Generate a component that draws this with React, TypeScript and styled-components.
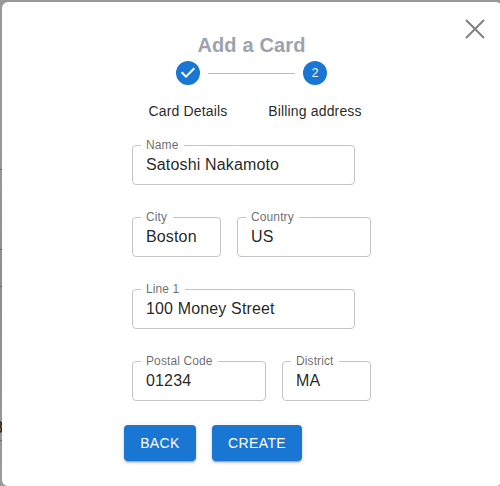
import React from "react";
import styled, { createGlobalStyle } from "styled-components";

const GlobalStyle = createGlobalStyle`
  *, *::before, *::after { box-sizing: border-box; }
  body {
    margin: 0;
    overflow: hidden;
    font-family: "Liberation Sans", Arial, sans-serif;
    color: rgba(0, 0, 0, 0.87);
  }
`;

const Backdrop = styled.div`
  position: relative;
  height: 486px;
  padding: 2px 0 0 2px;
  overflow: hidden;
  background: linear-gradient(#999 0, #999 30%, #8e8e8e 60%, #969696 85%, #9b9b9b 100%);
`;

const PageRule = styled.div<{ $top: number }>`
  position: absolute;
  left: 0;
  top: ${(p) => p.$top}px;
  width: 2px;
  height: 1px;
  background: #666;
`;

const PageText = styled.span`
  position: absolute;
  left: -6px;
  top: 419px;
  font-size: 16px;
  line-height: 18px;
  font-weight: 400;
  color: #111;
`;

const Dialog = styled.section`
  position: relative;
  display: flex;
  flex-direction: column;
  width: 500px;
  height: 484px;
  padding-top: 30px;
  border-radius: 6px;
  background: #fff;
`;

const CloseButton = styled.button`
  position: absolute;
  top: 17px;
  right: 17px;
  width: 20px;
  height: 20px;
  padding: 0;
  border: 0;
  background: none;

  svg { display: block; }
`;

const Title = styled.h2`
  margin: 0 1px 0 0;
  height: 29px;
  font-size: 20px;
  line-height: 27px;
  font-weight: 700;
  letter-spacing: 0.15px;
  text-align: center;
  color: #9ca3af;
`;

const Stepper = styled.ol`
  display: grid;
  grid-template-columns: 127px 127px;
  width: 254px;
  margin: 0 0 0 122px;
  padding: 0;
  list-style: none;
`;

const Step = styled.li`
  position: relative;
  display: flex;
  flex-direction: column;
  align-items: center;
`;

const Connector = styled.span`
  position: absolute;
  top: 12px;
  right: calc(50% + 20px);
  width: 87px;
  height: 1px;
  background: #bdbdbd;
`;

const StepIcon = styled.svg`
  display: block;
  width: 24px;
  height: 24px;
  overflow: visible;
`;

const StepLabel = styled.span`
  margin: 16px 0 0 1px;
  font-size: 14px;
  line-height: 20px;
  letter-spacing: 0.15px;
  white-space: nowrap;
`;

const Form = styled.form`
  display: flex;
  flex-direction: column;
  margin: 17px 0 0 130px;
`;

const Row = styled.div`
  display: flex;
  gap: 16px;
  height: 72px;
`;

const Outline = styled.fieldset<{ $width: number }>`
  width: ${(p) => p.$width}px;
  height: 47px;
  min-width: 0;
  margin: 0;
  padding: 0;
  border: 1px solid #c4c4c4;
  border-radius: 4px;
`;

const Legend = styled.legend`
  height: 14px;
  margin-left: 8px;
  padding: 0 5.4px 0 5px;
  font-size: 12px;
  line-height: 14px;
  letter-spacing: 0.1126px;
  white-space: nowrap;
  color: rgba(0, 0, 0, 0.6);
`;

const Input = styled.input`
  display: block;
  width: 100%;
  height: 25px;
  padding: 0 13px;
  border: 0;
  outline: 0;
  background: none;
  font: 16px/23px "Liberation Sans", Arial, sans-serif;
  letter-spacing: 0.15px;
  color: rgba(0, 0, 0, 0.87);
`;

const Actions = styled.div`
  display: flex;
  gap: 16px;
  margin: -1px 0 0 -8px;
`;

const Button = styled.button<{ $width: number }>`
  width: ${(p) => p.$width}px;
  height: 36px;
  padding: 0;
  border: 0;
  border-radius: 4px;
  background: #1976d2;
  color: #fff;
  font: 14px/24px "Liberation Sans", Arial, sans-serif;
  letter-spacing: 0.4px;
  text-transform: uppercase;
  box-shadow: 0 3px 1px -2px rgba(0, 0, 0, 0.2), 0 2px 2px 0 rgba(0, 0, 0, 0.14),
    0 1px 5px 0 rgba(0, 0, 0, 0.12);
`;

type FieldProps = { label: string; value: string; width: number };

const Field = ({ label, value, width }: FieldProps) => (
  <Outline $width={width}>
    <Legend>{label}</Legend>
    <Input aria-label={label} defaultValue={value} />
  </Outline>
);

const rows: FieldProps[][] = [
  [{ label: "Name", value: "Satoshi Nakamoto", width: 223 }],
  [
    { label: "City", value: "Boston", width: 89 },
    { label: "Country", value: "US", width: 134 },
  ],
  [{ label: "Line 1", value: "100 Money Street", width: 223 }],
  [
    { label: "Postal Code", value: "01234", width: 134 },
    { label: "District", value: "MA", width: 89 },
  ],
];

export default function App() {
  return (
    <>
      <GlobalStyle />
      <Backdrop>
        {[169, 249, 286, 440].map((top) => (
          <PageRule key={top} $top={top} />
        ))}
        <PageText aria-hidden>8</PageText>
        <Dialog role="dialog" aria-label="Add a Card">
          <CloseButton aria-label="Close">
            <svg width="20" height="20" viewBox="0 0 20 20">
              <path d="M1 1L19 19M19 1L1 19" stroke="#808080" strokeWidth="2" />
            </svg>
          </CloseButton>
          <Title>Add a Card</Title>
          <Stepper>
            <Step>
              <StepIcon viewBox="0 0 24 24">
                <path
                  fill="#1976d2"
                  d="M12 0a12 12 0 1 0 0 24 12 12 0 0 0 0-24zm-2 17l-5-5 1.4-1.4 3.6 3.6 7.6-7.6L19 8l-9 9z"
                />
              </StepIcon>
              <StepLabel>Card Details</StepLabel>
            </Step>
            <Step>
              <Connector />
              <StepIcon viewBox="0 0 24 24">
                <circle cx="12" cy="12" r="12" fill="#1976d2" />
                <text
                  x="12"
                  y="12"
                  fill="#fff"
                  fontSize="12"
                  textAnchor="middle"
                  dominantBaseline="central"
                >
                  2
                </text>
              </StepIcon>
              <StepLabel>Billing address</StepLabel>
            </Step>
          </Stepper>
          <Form onSubmit={(e) => e.preventDefault()}>
            {rows.map((fields, i) => (
              <Row key={i}>
                {fields.map((f) => (
                  <Field key={f.label} {...f} />
                ))}
              </Row>
            ))}
            <Actions>
              <Button type="button" $width={72}>Back</Button>
              <Button type="submit" $width={90}>Create</Button>
            </Actions>
          </Form>
        </Dialog>
      </Backdrop>
    </>
  );
}
